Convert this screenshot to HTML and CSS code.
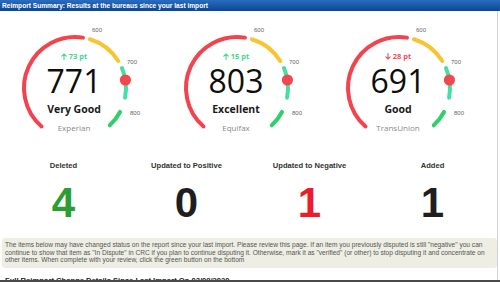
FILE: index.html
```html
<!DOCTYPE html>
<html>
<head>
<meta charset="utf-8">
<link rel="stylesheet" href="styles.css">
</head>
<body>
<div class="header">Reimport Summary: Results at the bureaus since your last import</div>
<div class="panel">
  <div class="gauges">
    <div class="gauge">
      <svg class="dial" width="162" height="118" viewBox="0 0 162 118">
        <path class="arc red" d="M41.54 106.49 A51 51 0 0 1 82.98 17.63"/>
        <path class="arc yellow" d="M89.91 19.23 A51 51 0 0 1 118.25 40.97"/>
        <path class="arc mint" d="M121.95 48.07 A51 51 0 0 1 125.06 77.73"/>
        <path class="arc green" d="M120.03 91.94 A51 51 0 0 1 109.78 105.30"/>
        <circle class="dot" cx="125.4" cy="60" r="5.6"/>
        <text class="tick" x="97" y="12">600</text>
        <text class="tick" x="132" y="44">700</text>
        <text class="tick" x="135" y="95">800</text>
      </svg>
      <div class="gauge-text">
        <div class="delta up"><svg width="6" height="7" viewBox="0 0 6 7"><path d="M3 6.5V1M0.8 3.2L3 1L5.2 3.2"/></svg>73 pt</div>
        <div class="score">771</div>
        <div class="rating">Very Good</div>
        <div class="bureau">Experian</div>
      </div>
    </div>
    <div class="gauge">
      <svg class="dial" width="162" height="118" viewBox="0 0 162 118">
        <path class="arc red" d="M41.54 106.49 A51 51 0 0 1 82.98 17.63"/>
        <path class="arc yellow" d="M89.91 19.23 A51 51 0 0 1 118.25 40.97"/>
        <path class="arc mint" d="M121.95 48.07 A51 51 0 0 1 125.06 77.73"/>
        <path class="arc green" d="M120.03 91.94 A51 51 0 0 1 109.78 105.30"/>
        <circle class="dot" cx="125.4" cy="60" r="5.6"/>
        <text class="tick" x="97" y="12">600</text>
        <text class="tick" x="132" y="44">700</text>
        <text class="tick" x="135" y="95">800</text>
      </svg>
      <div class="gauge-text">
        <div class="delta up"><svg width="6" height="7" viewBox="0 0 6 7"><path d="M3 6.5V1M0.8 3.2L3 1L5.2 3.2"/></svg>15 pt</div>
        <div class="score">803</div>
        <div class="rating">Excellent</div>
        <div class="bureau">Equifax</div>
      </div>
    </div>
    <div class="gauge">
      <svg class="dial" width="162" height="118" viewBox="0 0 162 118">
        <path class="arc red" d="M41.54 106.49 A51 51 0 0 1 82.98 17.63"/>
        <path class="arc yellow" d="M89.91 19.23 A51 51 0 0 1 118.25 40.97"/>
        <path class="arc mint" d="M121.95 48.07 A51 51 0 0 1 125.06 77.73"/>
        <path class="arc green" d="M120.03 91.94 A51 51 0 0 1 109.78 105.30"/>
        <circle class="dot" cx="125.4" cy="60" r="5.6"/>
        <text class="tick" x="97" y="12">600</text>
        <text class="tick" x="132" y="44">700</text>
        <text class="tick" x="135" y="95">800</text>
      </svg>
      <div class="gauge-text">
        <div class="delta down"><svg width="6" height="7" viewBox="0 0 6 7"><path d="M3 0.5V6M0.8 3.8L3 6L5.2 3.8"/></svg>28 pt</div>
        <div class="score">691</div>
        <div class="rating">Good</div>
        <div class="bureau">TransUnion</div>
      </div>
    </div>
  </div>
  <div class="stats">
    <div class="stat"><div class="stat-label">Deleted</div><div class="stat-num green-num">4</div></div>
    <div class="stat"><div class="stat-label">Updated to Positive</div><div class="stat-num">0</div></div>
    <div class="stat"><div class="stat-label">Updated to Negative</div><div class="stat-num red-num">1</div></div>
    <div class="stat"><div class="stat-label">Added</div><div class="stat-num">1</div></div>
  </div>
  <div class="notice">The items below may have changed status on the report since your last import. Please review this page. If an item you previously disputed is still "negative" you can<br>continue to show that item as "In Dispute" in CRC if you plan to continue disputing it. Otherwise, mark it as "verified" (or other) to stop disputing it and concentrate on<br>other items. When complete with your review, click the green button on the bottom</div>
  <div class="full">Full Reimport Change Details Since Last Import On 03/09/2020</div>
</div>
<div class="bottom-rule"></div>
</body>
</html>
```

FILE: styles.css
```css
html, body {
  margin: 0;
  padding: 0;
  background: #ffffff;
  font-family: "Liberation Sans", Arial, sans-serif;
  overflow: hidden;
}

.header {
  height: 11px;
  line-height: 11px;
  padding-left: 2px;
  background: linear-gradient(to bottom, #2a6cc0, #0b4697);
  color: #ffffff;
  font-weight: 700;
  font-size: 6.6px;
  white-space: nowrap;
}

.panel {
  width: 497px;
  border-right: 1px solid #d2d2d2;
  height: 271px;
}

.gauges {
  display: flex;
  padding-top: 9px;
}

.gauge {
  position: relative;
  width: 162px;
  height: 118px;
}

.dial {
  position: absolute;
  left: 0;
  top: 0;
}

.arc {
  fill: none;
  stroke-width: 4;
  stroke-linecap: round;
}
.arc.red { stroke: #f2434f; }
.arc.yellow { stroke: #f6c531; }
.arc.mint { stroke: #47dea2; }
.arc.green { stroke: #2fcf6c; }
.dot { fill: #f2474f; }

.tick {
  font-family: "Liberation Sans", Arial, sans-serif;
  font-size: 6px;
  fill: #666666;
  text-anchor: middle;
}

.gauge-text {
  position: relative;
  width: 100px;
  margin-left: 24px;
  padding-top: 31px;
  display: flex;
  flex-direction: column;
  align-items: center;
  font-family: "Open Sans", "Noto Sans", sans-serif;
}

.delta {
  display: flex;
  align-items: center;
  gap: 2px;
  height: 10px;
  line-height: 10px;
  font-size: 7.5px;
  font-weight: 700;
}
.delta svg path {
  fill: none;
  stroke-width: 1.1;
  stroke-linecap: round;
  stroke-linejoin: round;
}
.delta.up { color: #3fd597; }
.delta.up svg path { stroke: #3fd597; }
.delta.down { color: #f2505c; }
.delta.down svg path { stroke: #f2505c; }

.score {
  margin-top: 3.5px;
  font-size: 32px;
  line-height: 32px;
  font-weight: 500;
  color: #0d0d0d;
}

.rating {
  margin-top: 6.5px;
  font-size: 10.5px;
  line-height: 13px;
  font-weight: 700;
  color: #1a1a1a;
}

.bureau {
  margin-top: 7px;
  font-size: 8px;
  line-height: 10px;
  color: #8a8a8a;
}

.stats {
  display: grid;
  grid-template-columns: repeat(4, 123px);
  margin-left: 2px;
  margin-top: 23px;
}

.stat {
  display: flex;
  flex-direction: column;
  align-items: center;
}

.stat-label {
  font-size: 7.6px;
  line-height: 10px;
  font-weight: 700;
  color: #333333;
}

.stat-num {
  margin-top: 10.5px;
  font-size: 42px;
  line-height: 42px;
  font-weight: 700;
  color: #1e1e1e;
}
.green-num { color: #2a9d34; }
.red-num { color: #ec1c2c; }

.notice {
  margin-top: 14.5px;
  margin-left: 2px;
  padding: 3px 3px 4px;
  background: #eeeee4;
  border-radius: 3px;
  font-size: 6.6px;
  line-height: 7.7px;
  color: #555555;
  white-space: nowrap;
}

.full {
  margin-top: 7.4px;
  margin-left: 5px;
  font-size: 7.6px;
  line-height: 9px;
  font-weight: 700;
  color: #222222;
  white-space: nowrap;
}

.bottom-rule {
  position: fixed;
  left: 0;
  right: 0;
  bottom: 0;
  height: 2px;
  background: #4a4a4a;
}
```
